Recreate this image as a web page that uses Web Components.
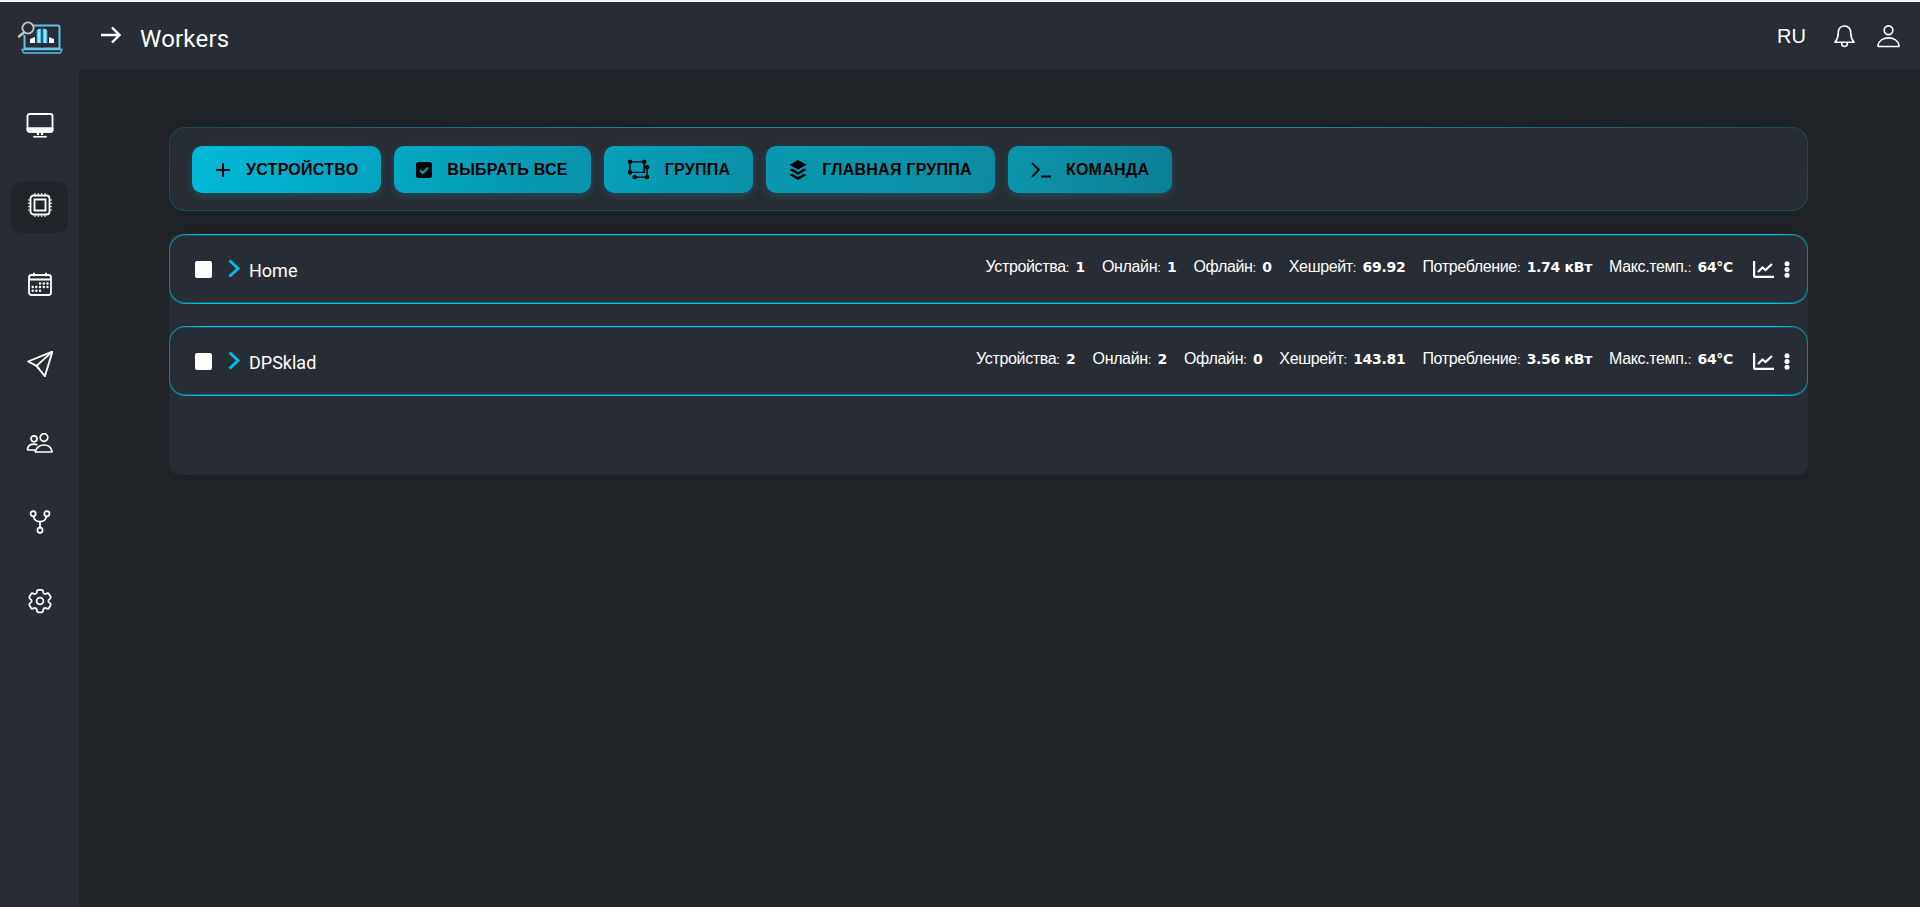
<!DOCTYPE html>
<html lang="ru">
<head>
<meta charset="utf-8">
<title>Workers</title>
<style>
  html, body { margin: 0; height: 100%; background: #212428; overflow: hidden; }
</style>
</head>
<body>
<app-shell>
  <side-bar slot="side">
    <nav-item>
      <svg viewBox="0 0 26 24" width="28" height="25" fill="none" stroke="#fff" stroke-width="1.800"><path d="M3 1h20a2 2 0 0 1 2 2v13a2 2 0 0 1-2 2H3a2 2 0 0 1-2-2V3a2 2 0 0 1 2-2z"/><path d="M1 14.500h24V16a2 2 0 0 1-2 2H3a2 2 0 0 1-2-2z" fill="#fff"/><path d="M11 18.500v2.500M15 18.500v2.500" stroke-width="2"/><path d="M6.500 22.800h13" stroke-width="1.600"/></svg>
    </nav-item>
    <nav-item active>
      <svg viewBox="0 0 24 24" width="24" height="24" fill="none" stroke="#fff" stroke-width="1.800"><rect x="2.500" y="2.500" width="19" height="19" rx="3"/><rect x="6.500" y="6.500" width="11" height="11" stroke-width="1.900"/><path d="M7 0v2M10.300 0v2M13.700 0v2M17 0v2M7 22v2M10.300 22v2M13.700 22v2M17 22v2M0 7h2M0 10.300h2M0 13.700h2M0 17h2M22 7h2M22 10.300h2M22 13.700h2M22 17h2" stroke-width="1"/></svg>
    </nav-item>
    <nav-item>
      <svg viewBox="0 0 24 24" width="24" height="24" fill="none" stroke="#fff" stroke-width="1.800"><rect x="1" y="3" width="22" height="20" rx="2.500"/><path d="M1 7.500h22M6 .8v3.500M18 .8v3.500"/><g fill="#fff" stroke="none"><circle cx="12" cy="11.500" r="1.200"/><circle cx="15.800" cy="11.500" r="1.200"/><circle cx="19.500" cy="11.500" r="1.200"/><circle cx="4.700" cy="15" r="1.200"/><circle cx="8.300" cy="15" r="1.200"/><circle cx="12" cy="15" r="1.200"/><circle cx="15.800" cy="15" r="1.200"/><circle cx="19.500" cy="15" r="1.200"/><circle cx="4.700" cy="18.800" r="1.200"/><circle cx="8.300" cy="18.800" r="1.200"/><circle cx="12" cy="18.800" r="1.200"/></g></svg>
    </nav-item>
    <nav-item>
      <svg viewBox="0 0 24 24" width="26" height="26" fill="none" stroke="#fff" stroke-width="1.700" stroke-linejoin="round"><path d="M23.500.5 1 9.700l7.800 4 7.700 9.500z"/><path d="M23.500.5 8.800 13.700l2.500 3.100"/></svg>
    </nav-item>
    <nav-item>
      <svg viewBox="0 0 26 20" width="27" height="20" fill="none" stroke="#fff" stroke-width="1.700"><circle cx="7.500" cy="5.800" r="3"/><circle cx="17.500" cy="4.500" r="3.800"/><path d="M8.500 17H2a1 1 0 0 1-1-1c.6-3 3-4.800 6.500-4.800 1.200 0 2.300.2 3.200.7"/><path d="M9.300 19h15.700c.4 0 .6-.3.5-.7-.8-4-3.800-6.300-8-6.300s-7.200 2.300-8.700 6.300c-.1.400.1.700.5.700z"/></svg>
    </nav-item>
    <nav-item>
      <svg viewBox="0 0 24 26" width="22" height="24" fill="none" stroke="#fff" stroke-width="1.900"><circle cx="4.500" cy="4" r="2.800"/><circle cx="19.500" cy="4" r="2.800"/><circle cx="12" cy="22" r="2.800"/><path d="M12 19v-6.500M5 7c.5 4 3.500 5.500 7 5.500s6.500-1.500 7-5.500"/></svg>
    </nav-item>
    <nav-item>
      <svg viewBox="0 0 24 24" width="30" height="30" fill="none" stroke="#fff" stroke-width="1.400" stroke-linejoin="round"><path d="M9.594 3.94c.09-.542.56-.94 1.11-.94h2.593c.55 0 1.02.398 1.11.94l.213 1.281c.063.374.313.686.645.87.074.04.147.083.22.127.325.196.72.257 1.075.124l1.217-.456a1.125 1.125 0 0 1 1.37.49l1.296 2.247a1.125 1.125 0 0 1-.26 1.431l-1.003.827c-.293.241-.438.613-.43.992a7.723 7.723 0 0 1 0 .255c-.008.378.137.75.43.991l1.004.827c.424.35.534.955.26 1.43l-1.298 2.247a1.125 1.125 0 0 1-1.369.491l-1.217-.456c-.355-.133-.75-.072-1.076.124a6.47 6.470 0 0 1-.22.128c-.331.183-.581.495-.644.869l-.213 1.281c-.09.543-.56.94-1.11.94h-2.594c-.55 0-1.019-.398-1.11-.94l-.213-1.281c-.062-.374-.312-.686-.644-.87a6.520 6.520 0 0 1-.22-.127c-.325-.196-.72-.257-1.076-.124l-1.217.456a1.125 1.125 0 0 1-1.369-.49l-1.297-2.247a1.125 1.125 0 0 1 .26-1.431l1.004-.827c.292-.24.437-.613.43-.991a6.932 6.932 0 0 1 0-.255c.007-.38-.138-.751-.43-.992l-1.004-.827a1.125 1.125 0 0 1-.26-1.43l1.297-2.247a1.125 1.125 0 0 1 1.37-.491l1.216.456c.356.133.751.072 1.076-.124.072-.044.146-.086.22-.128.332-.183.582-.495.644-.869l.214-1.28Z"/><circle cx="12" cy="12" r="2.700"/></svg>
    </nav-item>
  </side-bar>

  <top-bar slot="top" title-text="Workers"></top-bar>

  <tool-bar>
    <action-button style="--c1:#00b9d7;--c2:#04a4c0">
      <svg slot="icon" viewBox="0 0 16 16" width="16" height="16" fill="none" stroke="#000" stroke-width="2"><path d="M8 1v14M1 8h14"/></svg>
      Устройство
    </action-button>
    <action-button style="--c1:#04a8c3;--c2:#0992ab;--pl:22px">
      <svg slot="icon" viewBox="0 0 16 16" width="16" height="16"><rect width="16" height="16" rx="2.500"/><path d="M4 8.300l2.800 2.700L12 5.800" fill="none" stroke="#0aa0b8" stroke-width="2"/></svg>
      Выбрать все
    </action-button>
    <action-button style="--c1:#07a0ba;--c2:#098fa8">
      <svg slot="icon" viewBox="0 0 24 22" width="23" height="21" fill="none" stroke="#000" stroke-width="1.500"><path d="M3 3h15v11H3z"/><path d="M8 19h13V8.500h-3"/><g fill="#000"><rect x="1.500" y="1.500" width="3" height="3" rx="1"/><rect x="16.500" y="1.500" width="3" height="3" rx="1"/><rect x="1.500" y="12.500" width="3" height="3" rx="1"/><rect x="19.500" y="7" width="3" height="3" rx="1"/><rect x="19.500" y="17.500" width="3" height="3" rx="1"/><rect x="6.500" y="17.500" width="3" height="3" rx="1"/></g></svg>
      Группа
    </action-button>
    <action-button style="--c1:#0a98b1;--c2:#0b8ba3">
      <svg slot="icon" viewBox="0 0 18 18" width="18" height="20" preserveAspectRatio="none"><path d="M9 0 17.500 4.300 9 8.600.5 4.300z"/><path d="M3 7.700 9 10.800l6-3.100 2.500 1.300L9 13.300.5 9z"/><path d="M3 12.300l6 3 6-3 2.500 1.300L9 18 .5 13.600z"/></svg>
      Главная группа
    </action-button>
    <action-button style="--c1:#0a94ac;--c2:#0c7f96">
      <svg slot="icon" viewBox="0 0 22 16" width="20" height="16" preserveAspectRatio="none" fill="none" stroke="#000" stroke-width="2"><path d="M1 1l7.500 6.800L1 15"/><path d="M11 14.500h11"/></svg>
      Команда
    </action-button>
  </tool-bar>

  <worker-panel>
    <worker-row name="Home" devices="1" online="1" offline="0" hash="69.92" power="1.74 кВт" temp="64°C"></worker-row>
    <worker-row name="DPSklad" devices="2" online="2" offline="0" hash="143.81" power="3.56 кВт" temp="64°C"></worker-row>
  </worker-panel>
</app-shell>

<template id="app-shell-tpl">
  <style>
    :host { display: grid; grid-template-columns: 79px 1fr; grid-template-rows: 68px 1fr; height: 905px; border-top: 2px solid #f4f4f4; background: #212428; font-family: "Liberation Sans", Arial, sans-serif; color: #fff; }
    ::slotted([slot=side]) { grid-row: 1 / 3; }
    main { padding: 57px 112px 0 90px; display: flex; flex-direction: column; gap: 22px; }
  </style>
  <slot name="side"></slot>
  <slot name="top"></slot>
  <main><slot></slot></main>
</template>

<template id="side-bar-tpl">
  <style>
    :host { display: flex; flex-direction: column; background: #282c34; }
    .logo { height: 84px; display: flex; align-items: flex-start; justify-content: center; padding-top: 19px; box-sizing: border-box; }
    .list { display: flex; flex-direction: column; }
  </style>
  <div class="logo">
    <svg viewBox="0 0 46 34" width="46" height="34" fill="none">
      <defs><linearGradient id="b" x1="0" x2="1" y1="0" y2="0"><stop offset="0" stop-color="#0f9be0"/><stop offset=".5" stop-color="#c4f0fc"/><stop offset="1" stop-color="#0f9be0"/></linearGradient></defs>
      <path d="M9 4.500h32a1.500 1.500 0 0 1 1.500 1.500v21.500h-35V14" stroke="#63bfec" stroke-width="2"/>
      <path d="M5 28.500h40l-1 2.500a1.500 1.500 0 0 1-1.500 1H7.500A1.500 1.500 0 0 1 6 31z" stroke="#63bfec" stroke-width="1.300"/>
      <rect x="24" y="25" width="2" height="1.500" fill="#1a2a33"/>
      <path d="M13 22v-4l5-2v6z" fill="#fff"/>
      <path d="M19.500 22V10c0-1 1-2 5-2.500V22z" fill="url(#b)"/>
      <path d="M25.500 22V7.500c4 .5 5 1.500 5 2.500v12z" fill="url(#b)"/>
      <path d="M32 22v-6l5 2v4z" fill="#e9f6fc"/>
      <circle cx="11" cy="7" r="5.600" stroke="#c9c9c9" stroke-width="1.800" fill="#282c34"/>
      <path d="M7 11.500 2 15.500" stroke="#c9c9c9" stroke-width="2.400" stroke-linecap="round"/>
    </svg>
  </div>
  <div class="list"><slot></slot></div>
</template>

<template id="nav-item-tpl">
  <style>
    :host { display: flex; align-items: center; justify-content: center; height: 79.3px; }
    .box { width: 57px; height: 51px; box-sizing: border-box; border-radius: 10px; display: flex; align-items: center; justify-content: center; }
    :host([active]) .box { background: #212428; margin-top: 5px; padding-bottom: 5px; }
    ::slotted(svg) { display: block; }
  </style>
  <div class="box"><slot></slot></div>
</template>

<template id="top-bar-tpl">
  <style>
    :host { display: flex; align-items: center; background: #282c34; padding: 0 20px 0 22px; }
    .arrow { margin-top: -3px; }
    h1 { margin: 0 0 0 19px; padding-top: 5px; font: 400 24px Roboto, sans-serif; letter-spacing: .2px; color: #fff; }
    .right { margin-left: auto; display: flex; align-items: center; }
    .lang { font-size: 20px; margin-right: 28px; }
    .bell { margin-right: 22px; }
  </style>
  <svg class="arrow" viewBox="0 0 20 18" width="20" height="18" fill="none" stroke="#fff" stroke-width="2.400"><path d="M0 9h18M11 1.500 18.500 9 11 16.500"/></svg>
  <h1></h1>
  <div class="right">
    <span class="lang">RU</span>
    <svg class="bell" viewBox="0 0 22 24" width="21" height="24" fill="none" stroke="#fff" stroke-width="1.700" stroke-linejoin="round"><path d="M11 1.500c-4 0-6.500 3-6.500 7 0 5-1.500 7.500-3.500 10h20c-2-2.500-3.500-5-3.500-10 0-4-2.500-7-6.500-7z"/><path d="M8 19c0 2.500 1.300 4 3 4s3-1.500 3-4"/></svg>
    <svg viewBox="0 0 24 24" width="23" height="24" fill="none" stroke="#fff" stroke-width="1.700"><circle cx="12" cy="6" r="4.500"/><path d="M2 23c-.7 0-1.200-.5-1-1.200C2 17 6.500 14 12 14s10 3 11 7.800c.2.700-.3 1.200-1 1.200z"/></svg>
  </div>
</template>

<template id="tool-bar-tpl">
  <style>
    :host { display: flex; align-items: center; gap: 13px; height: 84px; box-sizing: border-box; padding: 0 22px; border: 1px solid transparent; border-radius: 16px;
      background: linear-gradient(#282c34, #282c34) padding-box,
        linear-gradient(90deg, #1b4a55, #128a9c 30%, #128a9c 70%, #1b4a55) top / 100% 50% no-repeat border-box,
        linear-gradient(#1a4f5a, #1a4f5a) border-box;
      box-shadow: 0 0 24px rgba(0,0,0,.14); }
  </style>
  <slot></slot>
</template>

<template id="action-button-tpl">
  <style>
    :host { display: inline-flex; align-items: center; gap: 15px; height: 47px; box-sizing: border-box; padding: 1px 23px 0 var(--pl, 23px); border-radius: 10px; flex: none;
      background: linear-gradient(100deg, var(--c1), var(--c2)); color: #000; font: 700 16px "Liberation Sans", Arial, sans-serif; text-transform: uppercase; letter-spacing: .25px; white-space: nowrap;
      box-shadow: 0 3px 8px rgba(0,190,225,.22); }
    ::slotted(svg) { display: block; flex: none; }
  </style>
  <slot name="icon"></slot><slot></slot>
</template>

<template id="worker-panel-tpl">
  <style>
    :host { display: flex; flex-direction: column; gap: 22px; background: #282c34; border-radius: 10px; height: 241px; box-shadow: 0 0 24px rgba(0,0,0,.14); margin-top: 1px; }
  </style>
  <slot></slot>
</template>

<template id="worker-row-tpl">
  <style>
    :host { display: flex; align-items: center; height: 70px; box-sizing: border-box; padding: 0 16px 0 25px; border: 1px solid transparent; border-radius: 16px;
      background: linear-gradient(#282c34, #282c34) padding-box, linear-gradient(90deg, #0f8299 0, #00c8ea 2%, #00c8ea 98%, #0f8299 100%) border-box;
      box-shadow: inset 0 -1px 0 rgba(0,200,234,.4), inset 0 1px 0 rgba(0,200,234,.2); }
    .check { width: 17px; height: 17px; background: #fff; border-radius: 2px; flex: none; }
    .chev { margin: -2px 9px 0 16px; flex: none; }
    .name { font: 400 18px Roboto, sans-serif; padding-top: 2px; }
    .stats { margin-left: auto; display: flex; align-items: center; gap: 17px; margin-top: -5px; }
    .stat { font-size: 16px; letter-spacing: -.35px; white-space: nowrap; display: flex; gap: 6.5px; align-items: baseline; }
    .stat i { font-style: normal; font-size: 13px; }
    .stat b { font: 700 14px "DejaVu Sans", sans-serif; letter-spacing: -.3px; }
    .acts { margin-left: 20px; display: flex; align-items: center; gap: 9px; }
    svg { display: block; }
  </style>
  <span class="check"></span>
  <svg class="chev" viewBox="0 0 12 19" width="12" height="19" fill="none" stroke="#00bce6" stroke-width="3"><path d="M1.500 1.500 10 9.500 1.500 17.500"/></svg>
  <span class="name"></span>
  <div class="stats"></div>
  <div class="acts">
    <svg viewBox="0 0 21 17" width="21" height="17" fill="none" stroke="#fff" stroke-width="2.200"><path d="M1.100 0v15a.9.9 0 0 0 .9.9H21"/><path d="M5 11l4.500-4.500 3 2.500 6.500-6"/></svg>
    <svg viewBox="0 0 8 17" width="8" height="17" fill="#fff"><circle cx="4" cy="2.700" r="2.500"/><circle cx="4" cy="8.500" r="2.500"/><circle cx="4" cy="14.300" r="2.500"/></svg>
  </div>
</template>

<script>
// small helper, every element just clones its template into an open shadow root
function shadowFrom(el, id) {
  const root = el.attachShadow({ mode: 'open' });
  root.append(document.getElementById(id).content.cloneNode(true));
  return root;
}

['app-shell', 'side-bar', 'nav-item', 'tool-bar', 'action-button', 'worker-panel'].forEach(tag => {
  customElements.define(tag, class extends HTMLElement {
    constructor() {
      super();
      shadowFrom(this, tag + '-tpl');
    }
  });
});

class TopBar extends HTMLElement {
  constructor() {
    super();
    this.root = shadowFrom(this, 'top-bar-tpl');
  }
  connectedCallback() {
    this.root.querySelector('h1').textContent = this.getAttribute('title-text');
  }
}
customElements.define('top-bar', TopBar);

class WorkerRow extends HTMLElement {
  constructor() {
    super();
    this.root = shadowFrom(this, 'worker-row-tpl');
  }
  connectedCallback() {
    this.root.querySelector('.name').textContent = this.getAttribute('name');
    const items = [
      ['Устройства', 'devices'], ['Онлайн', 'online'], ['Офлайн', 'offline'],
      ['Хешрейт', 'hash'], ['Потребление', 'power'], ['Макс.темп.', 'temp']
    ];
    this.root.querySelector('.stats').innerHTML = items.map(([label, key]) =>
      `<span class="stat"><span>${label}<i>:</i></span><b>${this.getAttribute(key)}</b></span>`).join('');
  }
}
customElements.define('worker-row', WorkerRow);
</script>
</body>
</html>
